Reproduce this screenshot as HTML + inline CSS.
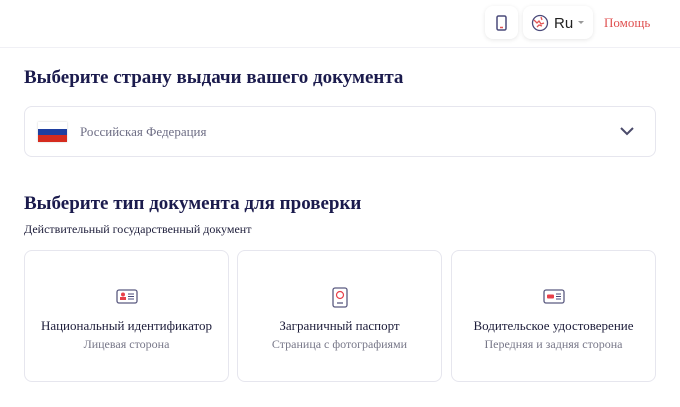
<!DOCTYPE html>
<html><head><meta charset="utf-8"><style>
*{box-sizing:border-box;margin:0;padding:0}
body{width:680px;height:407px;background:#fff;font-family:"Liberation Serif",serif;position:relative;overflow:hidden;color:#1d1d4f}
.hdr{position:absolute;left:0;top:0;width:680px;height:48px;border-bottom:1px solid #f0f0f5}
.btn{position:absolute;background:#fff;border-radius:8px;box-shadow:0 1px 4px rgba(0,0,0,.1)}
h2{position:absolute;left:24px;font-size:19px;font-weight:bold;color:#1b1b4d}
.sel{position:absolute;left:24px;top:106px;width:632px;height:51px;border:1px solid #e6e6ee;border-radius:8px}
.card{position:absolute;top:250px;width:205px;height:132px;border:1px solid #e6e6ee;border-radius:8px;text-align:center}
.t{position:absolute;top:67px;left:0;right:0;font-size:13px;color:#1d1d3a}
.s{position:absolute;top:86px;left:0;right:0;font-size:12px;color:#777788}
.ic{position:absolute;top:38px;left:50%}
</style></head><body>
<div class="hdr">
<div class="btn" style="left:485px;top:6px;width:33px;height:33px">
<svg width="33" height="33"><rect x="12" y="10" width="9" height="14" rx="1.5" fill="none" stroke="#4a4a7a" stroke-width="1.5"/><line x1="15" y1="21.5" x2="18" y2="21.5" stroke="#e25555" stroke-width="1.5"/></svg></div>
<div class="btn" style="left:523px;top:6px;width:70px;height:33px">
<svg width="70" height="33"><circle cx="17" cy="17" r="7.5" fill="none" stroke="#4a4a7a" stroke-width="1.3"/><path d="M11 14l3 3 2-2 2 3 3-1M14 21l2-2 3 1M18 11l1 3" fill="none" stroke="#e25555" stroke-width="1.3"/><text x="31" y="22" font-family="Liberation Sans" font-size="15" fill="#222">Ru</text><path d="M55 15l3 3 3-3z" fill="#999"/></svg></div>
<div style="position:absolute;left:604px;top:15px;font-size:13px;color:#e05050">Помощь</div>
</div>
<h2 style="top:67px">Выберите страну выдачи вашего документа</h2>
<div class="sel">
<div style="position:absolute;left:13px;top:15px;width:29px;height:20px;box-shadow:0 0 2px rgba(0,0,0,.2)"><div style="height:7px;background:#fff"></div><div style="height:6px;background:#1f3fa0"></div><div style="height:7px;background:#d52b1e"></div></div>
<div style="position:absolute;left:55px;top:17px;font-size:13px;color:#6e6e85">Российская Федерация</div>
<svg style="position:absolute;left:594px;top:18px" width="16" height="12"><path d="M2 3l6 6 6-6" fill="none" stroke="#4a4a6a" stroke-width="2"/></svg>
</div>
<h2 style="top:193px">Выберите тип документа для проверки</h2>
<div style="position:absolute;left:24px;top:222px;font-size:12px;color:#1d1d3a">Действительный государственный документ</div>
<div class="card" style="left:24px">
<svg class="ic" style="margin-left:-11px" width="22" height="16"><rect x="1" y="1" width="20" height="13" rx="2" fill="none" stroke="#5a5a80" stroke-width="1.3"/><circle cx="7" cy="5.5" r="2" fill="#e8404a"/><rect x="4" y="8" width="6" height="3" fill="#e8404a"/><path d="M12 5h6M12 7.5h6M12 10h6" stroke="#4a4a7a" stroke-width="1"/></svg>
<div class="t">Национальный идентификатор</div><div class="s">Лицевая сторона</div></div>
<div class="card" style="left:237px">
<svg class="ic" style="margin-left:-8px;top:36px" width="16" height="21"><rect x="1" y="1" width="14" height="19" rx="2" fill="none" stroke="#5a5a80" stroke-width="1.3"/><circle cx="8" cy="8" r="3.5" fill="none" stroke="#e8404a" stroke-width="1.2"/><path d="M5 16h6" stroke="#5a5a80" stroke-width="1.3"/></svg>
<div class="t">Заграничный паспорт</div><div class="s">Страница с фотографиями</div></div>
<div class="card" style="left:451px">
<svg class="ic" style="margin-left:-11px" width="22" height="16"><rect x="1" y="1" width="20" height="13" rx="2" fill="none" stroke="#5a5a80" stroke-width="1.3"/><rect x="4" y="5.5" width="7" height="4" rx="1" fill="#e8404a"/><path d="M13 5h5M13 7.5h5M13 10h5" stroke="#4a4a7a" stroke-width="1"/></svg>
<div class="t">Водительское удостоверение</div><div class="s">Передняя и задняя сторона</div></div>
</body></html>
